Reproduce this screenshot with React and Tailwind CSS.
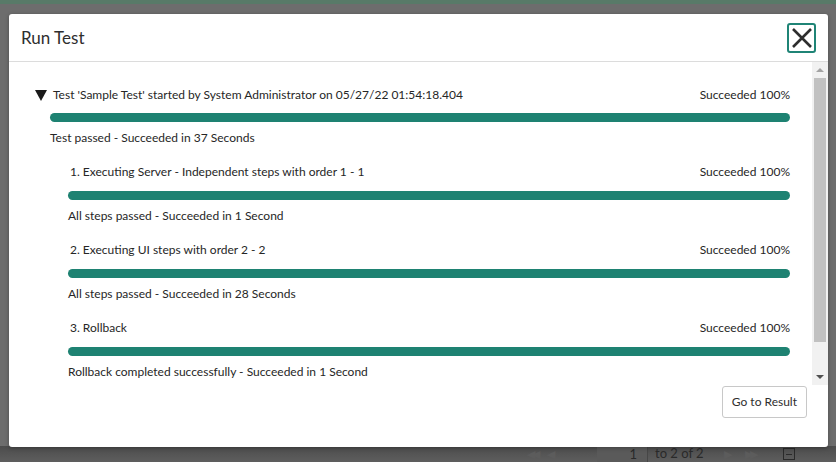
import React from 'react';

const steps = [
  { title: '1. Executing Server - Independent steps with order 1 - 1', note: 'All steps passed - Succeeded in 1 Second' },
  { title: '2. Executing UI steps with order 2 - 2', note: 'All steps passed - Succeeded in 28 Seconds' },
  { title: '3. Rollback', note: 'Rollback completed successfully - Succeeded in 1 Second' },
];

function Bar() {
  return <div className="h-[9px] w-full rounded-full bg-[#1e8272]" />;
}

export default function App() {
  return (
    <div className="relative w-[836px] h-[462px] overflow-hidden bg-[#6d6d6d] font-['Lato',sans-serif] text-[#262626]">
      {/* dimmed page behind the dialog */}
      <div className="flex flex-col h-full">
        <div className="h-[4px] bg-[#587a68]" />
        <div className="flex-1" />
        <div className="h-[16px] bg-gradient-to-b from-[#4c4c4c] to-[#5e5e5e] flex items-center text-[#2a2a2a] text-[13px]">
          <div className="ml-[527px] w-[45px] flex items-center gap-[10px] text-[#5c5c5c]">
            <span className="text-[11px] tracking-[-3px]">◀◀</span>
            <span className="text-[11px]">◀</span>
          </div>
          <div className="ml-[25px] w-[51px] h-full bg-[#5a5a5a] text-right pr-[10px] border-r border-[#474747] leading-[16px]">1</div>
          <div className="ml-[7px]">to 2 of 2</div>
          <div className="ml-[20px] w-[48px] flex items-center gap-[13px] text-[#5c5c5c]">
            <span className="text-[11px]">▶</span>
            <span className="text-[11px] tracking-[-3px]">▶▶</span>
          </div>
          <div className="ml-[11px] w-[12px] h-[12px] border border-[#2a2a2a] flex items-center justify-center">
            <div className="w-[6px] h-[1px] bg-[#2a2a2a]" />
          </div>
        </div>
      </div>

      {/* dialog */}
      <div className="absolute left-[9px] top-[14px] w-[819px] h-[433px] bg-white rounded-[3px] flex flex-col shadow-[0_1px_4px_rgba(0,0,0,0.3)]">
        <div className="h-[48px] flex items-center justify-between pl-[12px] pr-[12px] border-b border-[#dcdcdc] shrink-0">
          <h1 className="text-[17px] text-[#2e2e2e] pt-[1px]">Run Test</h1>
          <button className="w-[29px] h-[30px] border-2 border-[#1f8476] rounded-[3px] flex items-center justify-center">
            <svg width="22" height="22" viewBox="0 0 22 22">
              <path d="M2 2 L20 20 M20 2 L2 20" stroke="#2e2e2e" strokeWidth="2.6" />
            </svg>
          </button>
        </div>

        <div className="h-[323px] flex shrink-0">
          <div className="flex-1 pl-[26px] pr-[22px] pt-[24px] text-[12px]">
            <div className="flex items-center justify-between h-[18px]">
              <div className="flex items-center">
                <svg width="12" height="11" viewBox="0 0 12 11" className="mr-[6px]">
                  <path d="M0 0 H12 L6 11 Z" fill="#1a1a1a" />
                </svg>
                <span>Test 'Sample Test' started by System Administrator on 05/27/22 01:54:18.404</span>
              </div>
              <span>Succeeded 100%</span>
            </div>
            <div className="ml-[15px] mt-[9px]">
              <Bar />
              <div className="mt-[7px] h-[18px] leading-[18px]">Test passed - Succeeded in 37 Seconds</div>
            </div>
            <div className="ml-[33px]">
              {steps.map((s) => (
                <div key={s.title} className="mt-[16px]">
                  <div className="flex items-center justify-between h-[18px] pl-[2px]">
                    <span>{s.title}</span>
                    <span>Succeeded 100%</span>
                  </div>
                  <div className="mt-[10px]"><Bar /></div>
                  <div className="mt-[7px] h-[18px] leading-[18px]">{s.note}</div>
                </div>
              ))}
            </div>
          </div>
          {/* scrollbar */}
          <div className="w-[16px] bg-[#f1f1f1] flex flex-col items-center">
            <div className="h-[16px] flex items-center justify-center">
              <div className="w-0 h-0 border-l-[4px] border-r-[4px] border-b-[4px] border-l-transparent border-r-transparent border-b-[#a3a3a3]" />
            </div>
            <div className="w-[12px] h-[264px] bg-[#c1c1c1]" />
            <div className="flex-1" />
            <div className="h-[16px] flex items-center justify-center">
              <div className="w-0 h-0 border-l-[4px] border-r-[4px] border-t-[4px] border-l-transparent border-r-transparent border-t-[#505050]" />
            </div>
          </div>
        </div>

        <div className="flex justify-end pr-[21px] pt-[1px]">
          <button className="h-[32px] px-[9px] border border-[#c8c8c8] rounded-[3px] text-[12px] text-[#2e2e2e] bg-white">
            Go to Result
          </button>
        </div>
      </div>
    </div>
  );
}
